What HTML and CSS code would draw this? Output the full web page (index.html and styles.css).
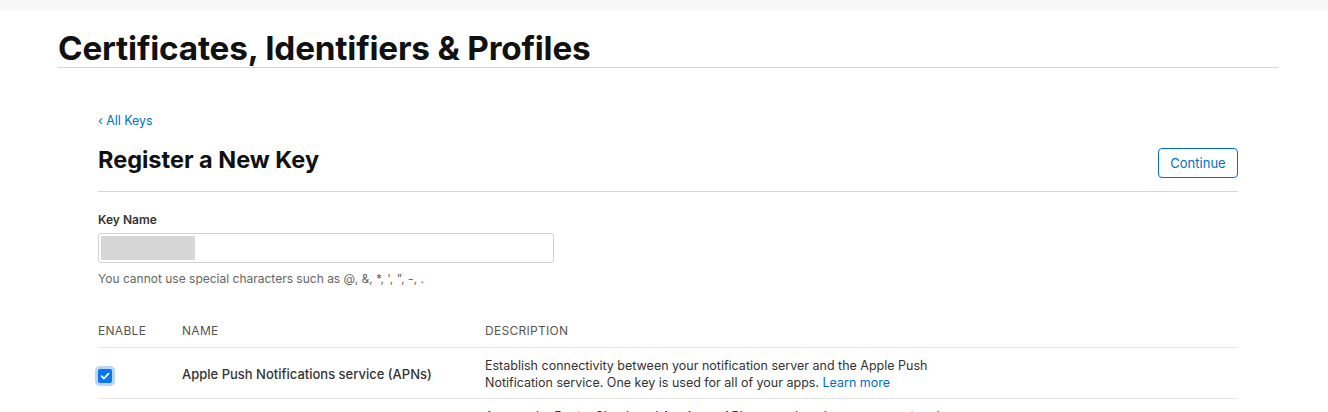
FILE: index.html
```html
<!DOCTYPE html>
<html lang="en">
<head>
<meta charset="utf-8">
<title>Register a New Key</title>
<link rel="stylesheet" href="styles.css">
</head>
<body>
<div class="topbar"></div>
<div class="page">
  <header class="page-header">
    <h1 class="page-title">Certificates, Identifiers &amp; Profiles</h1>
  </header>
  <main class="main">
    <a class="back-link" href="#">‹ All Keys</a>
    <div class="title-row">
      <h2 class="section-title">Register a New Key</h2>
      <button class="btn-continue" type="button">Continue</button>
    </div>
    <div class="field">
      <label class="field-label">Key Name</label>
      <div class="input-box"><span class="redacted"></span></div>
      <p class="field-help">You cannot use special characters such as @, &amp;, *, ', ", -, .</p>
    </div>
    <div class="table">
      <div class="row head">
        <div class="col-enable">ENABLE</div>
        <div class="col-name">NAME</div>
        <div class="col-desc">DESCRIPTION</div>
      </div>
      <div class="row">
        <div class="col-enable"><span class="checkbox"><svg viewBox="0 0 14 14" width="14" height="14"><path d="M3.6 7.2 L6 9.5 L10.5 4.6" fill="none" stroke="#fff" stroke-width="1.8" stroke-linecap="round" stroke-linejoin="round"/></svg></span></div>
        <div class="col-name name-text">Apple Push Notifications service (APNs)</div>
        <div class="col-desc desc-text">Establish connectivity between your notification server and the Apple Push Notification service. One key is used for all of your apps. <a href="#" class="link">Learn more</a></div>
      </div>
      <div class="row">
        <div class="col-enable"><span class="checkbox off"></span></div>
        <div class="col-name name-text">DeviceCheck</div>
        <div class="col-desc desc-text">Access the DeviceCheck and AppAttest APIs to get data that your associated server can use in its business logic to protect your business while maintaining user privacy.</div>
      </div>
    </div>
  </main>
</div>
</body>
</html>
```
FILE: styles.css
```css
* { box-sizing: border-box; }
html, body { margin: 0; padding: 0; background: #fff; }
body {
  font-family: Inter, "Noto Sans", "Liberation Sans", sans-serif;
  color: #1d1d1f;
  height: 412px;
  overflow: hidden;
}
.topbar { height: 10px; background: #f7f7f7; }
.page { padding: 0 50px 0 58px; }
.page-header { border-bottom: 1px solid #d6d6d6; padding-top: 20px; height: 58px; }
.page-title {
  margin: 0;
  font-size: 33.3px;
  line-height: 36px;
  font-weight: 700;
  letter-spacing: -0.2px;
  color: #111;
}
.main { padding: 0 40px; }
.back-link {
  display: block;
  margin-top: 45px;
  font-size: 12.4px;
  line-height: 16px;
  color: #0070c9;
  text-decoration: none;
}
.title-row {
  display: flex;
  justify-content: space-between;
  align-items: flex-end;
  border-bottom: 1px solid #d6d6d6;
  padding-bottom: 13px;
  margin-top: 17px;
}
.section-title {
  margin: 0 0 4px 0;
  font-size: 23.5px;
  line-height: 28px;
  font-weight: 700;
  color: #111;
}
.btn-continue {
  font-family: inherit;
  font-size: 13px;
  color: #0070c9;
  background: #fff;
  border: 1px solid #0070c9;
  border-radius: 4px;
  height: 30px;
  padding: 0;
  width: 80px;
}
.field { margin-top: 20px; }
.field-label {
  display: block;
  font-size: 12px;
  line-height: 16px;
  font-weight: 600;
  color: #333;
}
.input-box {
  margin-top: 5px;
  width: 456px;
  height: 30px;
  border: 1px solid #d2d2d2;
  border-radius: 3px;
  padding: 2px;
}
.redacted { display: block; width: 94px; height: 24px; background: #d6d6d6; }
.field-help {
  margin: 8px 0 0 0;
  font-size: 12px;
  line-height: 16px;
  color: #666;
}
.table { margin-top: 35px; }
.row {
  display: flex;
  border-bottom: 1px solid #e6e6e6;
  align-items: center;
}
.row.head {
  font-size: 12px;
  color: #555;
  letter-spacing: 0.3px;
  height: 26px;
  align-items: flex-start;
  padding-top: 1px;
}
.col-enable { width: 84px; }
.col-name { width: 303px; }
.col-desc { width: 460px; }
.row:not(.head) { min-height: 51px; padding: 9px 0 7px 0; }
.name-text { font-size: 13px; font-weight: 500; color: #333; }
.desc-text { font-size: 12.5px; line-height: 17px; color: #333; }
.link { color: #0070c9; text-decoration: none; }
.checkbox {
  display: inline-flex;
  align-items: center;
  justify-content: center;
  width: 14px;
  height: 14px;
  border-radius: 2px;
  background: #0a76f0;
  box-shadow: 0 0 0 3px #b9d5f7;
  vertical-align: middle;
}
.checkbox.off { background: #fff; border: 1px solid #999; box-shadow: none; }
```
